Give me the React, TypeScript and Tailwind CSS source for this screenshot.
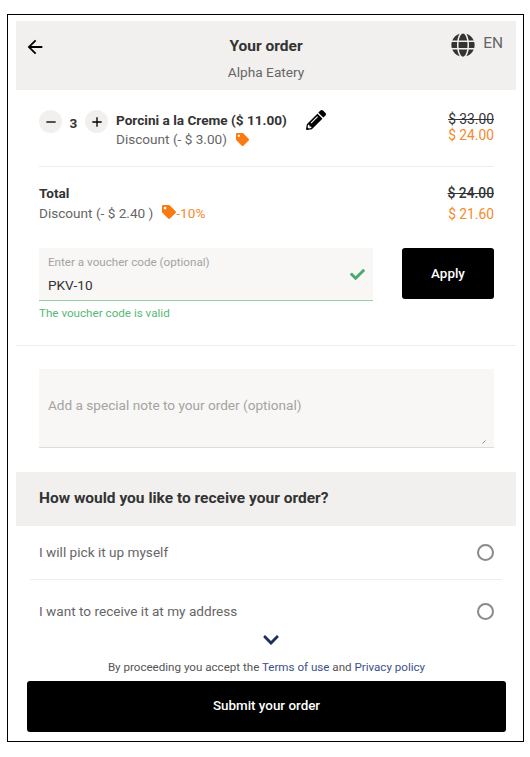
import { FaGlobe, FaPencilAlt, FaTag, FaCheck, FaChevronDown } from "react-icons/fa";
import { MdArrowBack, MdAdd, MdRemove } from "react-icons/md";

export default function App() {
  return (
    <div className="ml-[7px] mt-[14px] h-[728px] w-[517px] border border-black bg-white pl-2 pr-[7px] pt-[6px] text-[#3c3c3c] font-['Roboto',sans-serif]">
      <header className="flex h-[69px] items-start justify-between bg-[#f1f0ef] pl-2 pr-[13px]">
        <MdArrowBack className="mt-[15px] text-[22px] text-black" />
        <div className="ml-[35px] flex flex-col items-center pt-[15px]">
          <span className="text-[15.5px] font-bold leading-5 text-[#333]">Your order</span>
          <span className="mt-[6px] text-[13.7px] leading-5 text-[#666]">Alpha Eatery</span>
        </div>
        <div className="mt-3 flex items-center gap-2">
          <FaGlobe className="text-[24px] text-[#333]" />
          <span className="-mt-[2px] text-[15.5px] text-[#666]">EN</span>
        </div>
      </header>

      <div className="ml-[23px] mr-[22px]">
        <div className="flex h-[77px] items-start justify-between border-b border-[#eee] pt-[20px]">
          <div className="flex items-start">
            <button className="flex h-[23px] w-[23px] items-center justify-center rounded-full bg-[#f1f0ef] text-black"><MdRemove className="text-[16px]" /></button>
            <span className="w-[23px] text-center text-[13.6px] font-bold leading-[26px] text-[#333]">3</span>
            <button className="flex h-[23px] w-[23px] items-center justify-center rounded-full bg-[#f1f0ef] text-black"><MdAdd className="text-[16px]" /></button>
            <div className="ml-2">
              <div className="text-[13.6px] font-bold leading-[20px] text-[#333]">Porcini a la Creme ($ 11.00)</div>
              <div className="-mt-[1px] flex items-center gap-[9px] text-[13.6px] leading-[20px] text-[#666]">
                Discount (- $ 3.00)
                <FaTag className="text-[13px] text-[#f97a12]" />
              </div>
            </div>
            <FaPencilAlt className="ml-[19px] text-[20px] text-black" />
          </div>
          <div className="pt-[1px] text-right text-[13.8px] leading-[16px]">
            <div className="text-[#333] line-through">$ 33.00</div>
            <div className="text-[#f58a2c]">$ 24.00</div>
          </div>
        </div>

        <div className="flex justify-between pt-[16px]">
          <div>
            <div className="text-[13.6px] font-bold leading-5 text-[#333]">Total</div>
            <div className="flex items-center text-[13.6px] leading-5 text-[#666]">
              Discount (- $ 2.40 )
              <FaTag className="ml-[9px] -mt-[3px] text-[14px] text-[#f97a12]" />
              <span className="text-[#f58a2c]">-10%</span>
            </div>
          </div>
          <div className="text-right text-[13.8px] leading-5">
            <div className="font-medium text-[#333] line-through">$ 24.00</div>
            <div className="mt-[1px] text-[#f58a2c]">$ 21.60</div>
          </div>
        </div>

        <div className="mt-[24px] flex justify-between">
          <div className="w-[334px]">
            <div className="relative h-[53px] border-b border-[#8fd3a6] bg-[#f8f7f5] pl-[9px] pt-[6px]">
              <div className="text-[11.65px] leading-4 text-[#a3a3a3]">Enter a voucher code (optional)</div>
              <div className="mt-[5px] text-[13.6px] leading-5 text-[#333]">PKV-10</div>
              <FaCheck className="absolute right-[8px] top-[19px] text-[15px] text-[#45ad6c]" />
            </div>
            <div className="mt-[4px] text-[11.65px] leading-4 text-[#57b877]">The voucher code is valid</div>
          </div>
          <button className="h-[51px] w-[92px] rounded-[3px] bg-black pt-[2px] text-[13.4px] font-medium text-white">Apply</button>
        </div>
      </div>

      <div className="mt-[24px] border-t border-[#eeeeee]" />

      <div className="relative ml-[23px] mr-[22px] mt-[23px] flex">
        <textarea
          placeholder="Add a special note to your order (optional)"
          className="h-[79px] w-full resize-none border-b border-[#dcdcdc] bg-[#f8f7f5] pl-[9px] pt-[26px] text-[13.6px] leading-5 outline-none placeholder:text-[#a3a3a3]"
        />
        <svg className="absolute bottom-[4px] right-[8px] h-[4px] w-[4px]" viewBox="0 0 4 4">
          <path d="M0.5 3.5 L3.5 0.5" stroke="#888" strokeWidth="1" />
        </svg>
      </div>

      <div className="mt-[24px] flex h-[54px] items-center bg-[#f1f0ef] pl-[23px] text-[15.5px] font-bold text-[#333]">
        How would you like to receive your order?
      </div>

      <div className="mx-[14px]">
        <div className="flex h-[54px] items-center justify-between border-b border-[#eee] pl-[9px] pr-[8px] text-[13.6px] text-[#666]">
          I will pick it up myself
          <span className="h-[17px] w-[17px] rounded-full border-2 border-[#8a8a8a]" />
        </div>
        <div className="flex h-[62px] items-center justify-between pl-[9px] pr-[8px] text-[13.6px] text-[#666]">
          I want to receive it at my address
          <span className="h-[17px] w-[17px] rounded-full border-2 border-[#8a8a8a]" />
        </div>
      </div>

      <div className="-mt-[11px] flex justify-center pl-[10px]">
        <FaChevronDown className="text-[18px] text-[#1e2f5f]" />
      </div>
      <div className="mt-[10px] pl-[1px] text-center text-[11.6px] leading-4 text-[#555]">
        By proceeding you accept the <span className="text-[#3d5088]">Terms of use</span> and <span className="text-[#3d5088]">Privacy policy</span>
      </div>
      <div className="mx-[11px] mt-[6px]">
        <button className="h-[51px] w-[479px] rounded-[3px] bg-black text-[13.4px] font-medium text-white">Submit your order</button>
      </div>
    </div>
  );
}
